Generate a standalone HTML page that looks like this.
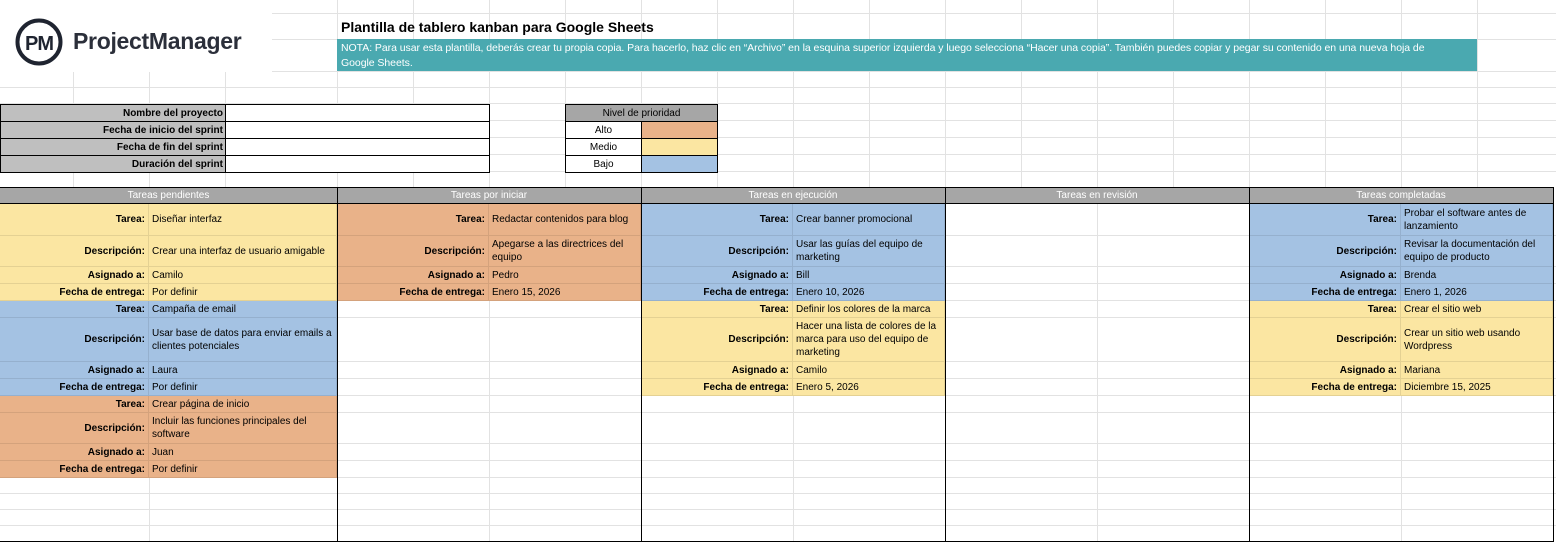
<!DOCTYPE html>
<html><head><meta charset="utf-8">
<style>
*{margin:0;padding:0}
body{width:1556px;height:544px;position:relative;background:#fff;font-family:"Liberation Sans",Arial,sans-serif;overflow:hidden;color:#000}
.c{position:absolute;display:flex;align-items:center;box-sizing:border-box;border-right:1px solid rgba(0,0,0,.09);border-bottom:1px solid rgba(0,0,0,.09);font-size:10px;line-height:13px;overflow:hidden}
.l{justify-content:flex-end;font-weight:bold;padding-right:3px;text-align:right}
.v{padding-left:3px;padding-right:4px}
.y{background:#fbe6a2}.o{background:#e9b289}.b{background:#a4c2e3}
.b1{position:absolute;box-sizing:border-box;border:1px solid #000;font-size:10px;display:flex;align-items:center}
.hd{position:absolute;top:187px;height:17px;background:#a6a6a6;color:#fff;font-size:10px;display:flex;align-items:center;justify-content:center;box-sizing:border-box;border-top:1px solid #000;border-bottom:1px solid #000}
.vl{position:absolute;top:187px;width:1px;height:355px;background:#000}
</style></head><body>
<svg width="1556" height="544" style="position:absolute;left:0;top:0">
<g stroke="#e2e2e2" stroke-width="1">
<line x1="0" y1="13.5" x2="1556" y2="13.5"/><line x1="0" y1="39.5" x2="1556" y2="39.5"/><line x1="0" y1="71.5" x2="1556" y2="71.5"/><line x1="0" y1="87.5" x2="1556" y2="87.5"/><line x1="0" y1="103.5" x2="1556" y2="103.5"/><line x1="0" y1="120.5" x2="1556" y2="120.5"/><line x1="0" y1="137.5" x2="1556" y2="137.5"/><line x1="0" y1="154.5" x2="1556" y2="154.5"/><line x1="0" y1="171.5" x2="1556" y2="171.5"/>
<line x1="0" y1="235.5" x2="1556" y2="235.5"/><line x1="0" y1="266.5" x2="1556" y2="266.5"/><line x1="0" y1="283.5" x2="1556" y2="283.5"/><line x1="0" y1="300.5" x2="1556" y2="300.5"/><line x1="0" y1="317.5" x2="1556" y2="317.5"/><line x1="0" y1="361.5" x2="1556" y2="361.5"/><line x1="0" y1="378.5" x2="1556" y2="378.5"/><line x1="0" y1="395.5" x2="1556" y2="395.5"/><line x1="0" y1="412.5" x2="1556" y2="412.5"/><line x1="0" y1="443.5" x2="1556" y2="443.5"/><line x1="0" y1="460.5" x2="1556" y2="460.5"/><line x1="0" y1="477.5" x2="1556" y2="477.5"/><line x1="0" y1="493.5" x2="1556" y2="493.5"/><line x1="0" y1="509.5" x2="1556" y2="509.5"/><line x1="0" y1="525.5" x2="1556" y2="525.5"/>
<line x1="73.5" y1="0" x2="73.5" y2="187"/><line x1="149.5" y1="0" x2="149.5" y2="541"/><line x1="225.5" y1="0" x2="225.5" y2="187"/><line x1="337.5" y1="0" x2="337.5" y2="187"/><line x1="413.5" y1="0" x2="413.5" y2="187"/><line x1="489.5" y1="0" x2="489.5" y2="541"/><line x1="565.5" y1="0" x2="565.5" y2="187"/><line x1="641.5" y1="0" x2="641.5" y2="187"/><line x1="717.5" y1="0" x2="717.5" y2="187"/><line x1="793.5" y1="0" x2="793.5" y2="541"/><line x1="869.5" y1="0" x2="869.5" y2="187"/><line x1="945.5" y1="0" x2="945.5" y2="187"/><line x1="1021.5" y1="0" x2="1021.5" y2="187"/><line x1="1097.5" y1="0" x2="1097.5" y2="541"/><line x1="1173.5" y1="0" x2="1173.5" y2="187"/><line x1="1249.5" y1="0" x2="1249.5" y2="187"/><line x1="1325.5" y1="0" x2="1325.5" y2="187"/><line x1="1401.5" y1="0" x2="1401.5" y2="541"/><line x1="1477.5" y1="0" x2="1477.5" y2="187"/>
</g></svg>

<!-- logo -->
<div style="position:absolute;left:0;top:0;width:272px;height:72px;background:#fff"></div>
<svg width="60" height="60" style="position:absolute;left:9px;top:12px" viewBox="0 0 60 60">
<circle cx="30" cy="30" r="21.5" fill="none" stroke="#1f2430" stroke-width="4"/>
<text x="30" y="38" text-anchor="middle" font-family="Liberation Sans" font-weight="bold" font-size="20" fill="#1f2430" letter-spacing="-1">PM</text>
</svg>
<div style="position:absolute;left:73px;top:28px;font-size:23px;font-weight:bold;color:#2b2f3a;letter-spacing:-0.3px">ProjectManager</div>

<div style="position:absolute;left:341px;top:19px;font-size:14px;font-weight:bold">Plantilla de tablero kanban para Google Sheets</div>
<div style="position:absolute;left:337px;top:39px;width:1140px;height:32px;background:#4aa9b0;color:#fff;font-size:10.5px;line-height:15px;padding:2px 0 2px 4px;box-sizing:border-box;letter-spacing:-0.05px">NOTA: Para usar esta plantilla, deberás crear tu propia copia. Para hacerlo, haz clic en “Archivo” en la esquina superior izquierda y luego selecciona “Hacer una copia”. También puedes copiar y pegar su contenido en una nueva hoja de<br>Google Sheets.</div>

<!-- project table -->
<div class="b1" style="left:0;top:104px;width:226px;height:18px;background:#bfbfbf;justify-content:flex-end;padding-right:2px;font-weight:bold">Nombre del proyecto</div>
<div class="b1" style="left:0;top:121px;width:226px;height:18px;background:#bfbfbf;justify-content:flex-end;padding-right:2px;font-weight:bold">Fecha de inicio del sprint</div>
<div class="b1" style="left:0;top:138px;width:226px;height:18px;background:#bfbfbf;justify-content:flex-end;padding-right:2px;font-weight:bold">Fecha de fin del sprint</div>
<div class="b1" style="left:0;top:155px;width:226px;height:18px;background:#bfbfbf;justify-content:flex-end;padding-right:2px;font-weight:bold">Duración del sprint</div>
<div class="b1" style="left:225px;top:104px;width:265px;height:18px;background:#fff"></div>
<div class="b1" style="left:225px;top:121px;width:265px;height:18px;background:#fff"></div>
<div class="b1" style="left:225px;top:138px;width:265px;height:18px;background:#fff"></div>
<div class="b1" style="left:225px;top:155px;width:265px;height:18px;background:#fff"></div>

<!-- priority -->
<div class="b1" style="left:565px;top:104px;width:153px;height:18px;background:#a6a6a6;justify-content:center">Nivel de prioridad</div>
<div class="b1" style="left:565px;top:121px;width:77px;height:18px;background:#fff;justify-content:center">Alto</div>
<div class="b1" style="left:565px;top:138px;width:77px;height:18px;background:#fff;justify-content:center">Medio</div>
<div class="b1" style="left:565px;top:155px;width:77px;height:18px;background:#fff;justify-content:center">Bajo</div>
<div class="b1" style="left:641px;top:121px;width:77px;height:18px;background:#e9b289"></div>
<div class="b1" style="left:641px;top:138px;width:77px;height:18px;background:#fbe6a2"></div>
<div class="b1" style="left:641px;top:155px;width:77px;height:18px;background:#a4c2e3"></div>

<!-- headers -->
<div class="hd" style="left:0;width:337px">Tareas pendientes</div>
<div class="hd" style="left:337px;width:304px">Tareas por iniciar</div>
<div class="hd" style="left:641px;width:304px">Tareas en ejecución</div>
<div class="hd" style="left:945px;width:304px">Tareas en revisión</div>
<div class="hd" style="left:1249px;width:304px">Tareas completadas</div>

<!-- col 0 -->
<div class="c l y" style="left:0;top:204px;width:149px;height:32px">Tarea:</div><div class="c v y" style="left:149px;top:204px;width:188px;height:32px">Diseñar interfaz</div>
<div class="c l y" style="left:0;top:236px;width:149px;height:31px">Descripción:</div><div class="c v y" style="left:149px;top:236px;width:188px;height:31px">Crear una interfaz de usuario amigable</div>
<div class="c l y" style="left:0;top:267px;width:149px;height:17px">Asignado a:</div><div class="c v y" style="left:149px;top:267px;width:188px;height:17px">Camilo</div>
<div class="c l y" style="left:0;top:284px;width:149px;height:17px">Fecha de entrega:</div><div class="c v y" style="left:149px;top:284px;width:188px;height:17px">Por definir</div>
<div class="c l b" style="left:0;top:301px;width:149px;height:17px">Tarea:</div><div class="c v b" style="left:149px;top:301px;width:188px;height:17px">Campaña de email</div>
<div class="c l b" style="left:0;top:318px;width:149px;height:44px">Descripción:</div><div class="c v b" style="left:149px;top:318px;width:188px;height:44px">Usar base de datos para enviar emails a clientes potenciales</div>
<div class="c l b" style="left:0;top:362px;width:149px;height:17px">Asignado a:</div><div class="c v b" style="left:149px;top:362px;width:188px;height:17px">Laura</div>
<div class="c l b" style="left:0;top:379px;width:149px;height:17px">Fecha de entrega:</div><div class="c v b" style="left:149px;top:379px;width:188px;height:17px">Por definir</div>
<div class="c l o" style="left:0;top:396px;width:149px;height:17px">Tarea:</div><div class="c v o" style="left:149px;top:396px;width:188px;height:17px">Crear página de inicio</div>
<div class="c l o" style="left:0;top:413px;width:149px;height:31px">Descripción:</div><div class="c v o" style="left:149px;top:413px;width:188px;height:31px">Incluir las funciones principales del software</div>
<div class="c l o" style="left:0;top:444px;width:149px;height:17px">Asignado a:</div><div class="c v o" style="left:149px;top:444px;width:188px;height:17px">Juan</div>
<div class="c l o" style="left:0;top:461px;width:149px;height:17px">Fecha de entrega:</div><div class="c v o" style="left:149px;top:461px;width:188px;height:17px">Por definir</div>

<!-- col 1 -->
<div class="c l o" style="left:337px;top:204px;width:152px;height:32px">Tarea:</div><div class="c v o" style="left:489px;top:204px;width:152px;height:32px">Redactar contenidos para blog</div>
<div class="c l o" style="left:337px;top:236px;width:152px;height:31px">Descripción:</div><div class="c v o" style="left:489px;top:236px;width:152px;height:31px">Apegarse a las directrices del equipo</div>
<div class="c l o" style="left:337px;top:267px;width:152px;height:17px">Asignado a:</div><div class="c v o" style="left:489px;top:267px;width:152px;height:17px">Pedro</div>
<div class="c l o" style="left:337px;top:284px;width:152px;height:17px">Fecha de entrega:</div><div class="c v o" style="left:489px;top:284px;width:152px;height:17px">Enero 15, 2026</div>

<!-- col 2 -->
<div class="c l b" style="left:641px;top:204px;width:152px;height:32px">Tarea:</div><div class="c v b" style="left:793px;top:204px;width:152px;height:32px">Crear banner promocional</div>
<div class="c l b" style="left:641px;top:236px;width:152px;height:31px">Descripción:</div><div class="c v b" style="left:793px;top:236px;width:152px;height:31px">Usar las guías del equipo de marketing</div>
<div class="c l b" style="left:641px;top:267px;width:152px;height:17px">Asignado a:</div><div class="c v b" style="left:793px;top:267px;width:152px;height:17px">Bill</div>
<div class="c l b" style="left:641px;top:284px;width:152px;height:17px">Fecha de entrega:</div><div class="c v b" style="left:793px;top:284px;width:152px;height:17px">Enero 10, 2026</div>
<div class="c l y" style="left:641px;top:301px;width:152px;height:17px">Tarea:</div><div class="c v y" style="left:793px;top:301px;width:152px;height:17px">Definir los colores de la marca</div>
<div class="c l y" style="left:641px;top:318px;width:152px;height:44px">Descripción:</div><div class="c v y" style="left:793px;top:318px;width:152px;height:44px">Hacer una lista de colores de la marca para uso del equipo de marketing</div>
<div class="c l y" style="left:641px;top:362px;width:152px;height:17px">Asignado a:</div><div class="c v y" style="left:793px;top:362px;width:152px;height:17px">Camilo</div>
<div class="c l y" style="left:641px;top:379px;width:152px;height:17px">Fecha de entrega:</div><div class="c v y" style="left:793px;top:379px;width:152px;height:17px">Enero 5, 2026</div>

<!-- col 4 -->
<div class="c l b" style="left:1249px;top:204px;width:152px;height:32px">Tarea:</div><div class="c v b" style="left:1401px;top:204px;width:152px;height:32px">Probar el software antes de lanzamiento</div>
<div class="c l b" style="left:1249px;top:236px;width:152px;height:31px">Descripción:</div><div class="c v b" style="left:1401px;top:236px;width:152px;height:31px">Revisar la documentación del equipo de producto</div>
<div class="c l b" style="left:1249px;top:267px;width:152px;height:17px">Asignado a:</div><div class="c v b" style="left:1401px;top:267px;width:152px;height:17px">Brenda</div>
<div class="c l b" style="left:1249px;top:284px;width:152px;height:17px">Fecha de entrega:</div><div class="c v b" style="left:1401px;top:284px;width:152px;height:17px">Enero 1, 2026</div>
<div class="c l y" style="left:1249px;top:301px;width:152px;height:17px">Tarea:</div><div class="c v y" style="left:1401px;top:301px;width:152px;height:17px">Crear el sitio web</div>
<div class="c l y" style="left:1249px;top:318px;width:152px;height:44px">Descripción:</div><div class="c v y" style="left:1401px;top:318px;width:152px;height:44px">Crear un sitio web usando Wordpress</div>
<div class="c l y" style="left:1249px;top:362px;width:152px;height:17px">Asignado a:</div><div class="c v y" style="left:1401px;top:362px;width:152px;height:17px">Mariana</div>
<div class="c l y" style="left:1249px;top:379px;width:152px;height:17px">Fecha de entrega:</div><div class="c v y" style="left:1401px;top:379px;width:152px;height:17px">Diciembre 15, 2025</div>

<!-- borders -->
<div class="vl" style="left:337px"></div>
<div class="vl" style="left:641px"></div>
<div class="vl" style="left:945px"></div>
<div class="vl" style="left:1249px"></div>
<div class="vl" style="left:1553px"></div>
<div style="position:absolute;left:0;top:541px;width:1554px;height:1px;background:#000"></div>
</body></html>
